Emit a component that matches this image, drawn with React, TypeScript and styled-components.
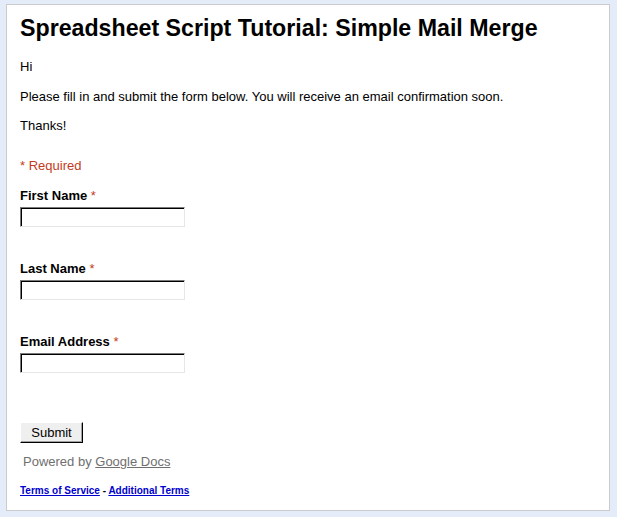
import styled, { createGlobalStyle } from "styled-components";

const GlobalStyle = createGlobalStyle`
body {
  margin : 0;
  background : #e5ecf9;
  font-family : "Liberation Sans", Arial, sans-serif;
}
`;

const Card = styled.div`
margin : 4px 7px 6px 6px;
background : #ffffff;
border : 1px solid #cccccc;
padding : 11px 13px 13px 13px;
`;

const Title = styled.h1`
font-size : 23.2px;
line-height : 25px;
font-weight : bold;
color : #000;
margin : 0 0 18px 0;
`;

const Text = styled.p`
font-size : 13px;
line-height : 16px;
margin : 0 0 13.5px 0;
color : #000;
`;

const Required = styled.div`
font-size : 13px;
line-height : 16px;
color : #c43b1d;
margin : 24px 0 14px 0;
`;

const Star = styled.span`
color : #c43b1d;
font-weight : normal;
`;

const Field = styled.div`
display : flex;
flex-direction : column;
align-items : flex-start;
margin-bottom : 34px;
&:last-of-type{
  margin-bottom : 49px;
}
`;

const Label = styled.label`
font-size : 13px;
line-height : 16px;
font-weight : bold;
color : #000;
margin-bottom : 3px;
`;

const Input = styled.input`
box-sizing : border-box;
width : 165px;
height : 20px;
margin : 0;
padding : 1px 2px;
border : 1px solid;
border-color : #7a7a7a #e6e6e6 #e6e6e6 #7a7a7a;
box-shadow : inset 1px 1px 0 #000;
background : #fff;
font-family : "Liberation Sans", Arial, sans-serif;
font-size : 13px;
outline : none;
`;

const Button = styled.button`
box-sizing : border-box;
width : 63px;
height : 21px;
margin : 0;
padding : 0;
background : #efefef;
border : 1px solid;
border-color : #ffffff #000000 #000000 #ffffff;
box-shadow : inset -1px -1px 0 #a0a0a0;
font-family : "Liberation Sans", Arial, sans-serif;
font-size : 13px;
color : #000;
`;

const Powered = styled.div`
font-size : 13px;
line-height : 16px;
color : #6f6f6f;
margin : 11px 0 15px 3px;
a{
  color : #6f6f6f;
  text-decoration : underline;
}
`;

const Legal = styled.div`
font-size : 10px;
line-height : 12px;
font-weight : bold;
color : #000;
a{
  color : #0000cc;
  text-decoration : underline;
}
`;

const fields = ["First Name", "Last Name", "Email Address"];

function App(){
  return (
    <>
      <GlobalStyle/>
      <Card>
        <Title>Spreadsheet Script Tutorial: Simple Mail Merge</Title>
        <Text>Hi</Text>
        <Text>Please fill in and submit the form below. You will receive an email confirmation soon.</Text>
        <Text>Thanks!</Text>
        <Required>* Required</Required>
        <form onSubmit={(e) => e.preventDefault()}>
          {fields.map((name) => (
            <Field key={name}>
              <Label>{name} <Star>*</Star></Label>
              <Input type="text"/>
            </Field>
          ))}
          <Button type="submit">Submit</Button>
        </form>
        <Powered>Powered by <a href="#">Google Docs</a></Powered>
        <Legal>
          <a href="#">Terms of Service</a> - <a href="#">Additional Terms</a>
        </Legal>
      </Card>
    </>
  );
}

export default App;
